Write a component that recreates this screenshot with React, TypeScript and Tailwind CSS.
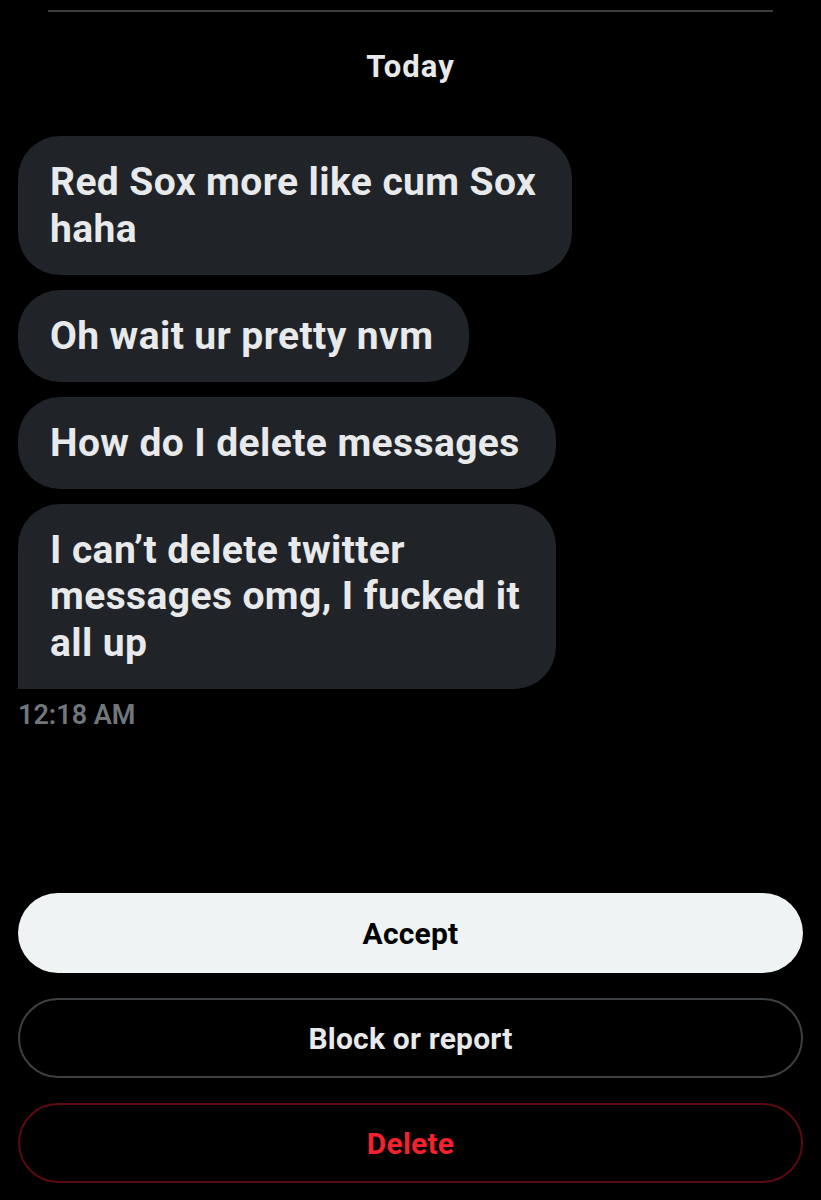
import React from 'react'

const messages = [
  ['Red Sox more like cum Sox', 'haha'],
  ['Oh wait ur pretty nvm'],
  ['How do I delete messages'],
  ['I can\u2019t delete twitter', 'messages omg, I fucked it', 'all up'],
]

const App = () => {
  return (
    <div className="w-full min-h-[1200px] bg-black flex flex-col font-['Roboto',sans-serif]">
      <div className="mx-[48px] mt-[10px] h-[2px] bg-[#3a3d40]" />

      <p className="mt-[35px] text-center text-[31px] leading-[40px] font-bold tracking-[1px] text-[#e7e9ea]">Today</p>

      <div className="mt-[49px] px-[18px] flex flex-col items-start gap-[14.5px]">
        {messages.map((lines, i) => (
          <div
            key={i}
            className={
              i === messages.length - 1
                ? 'w-fit bg-[#202327] rounded-[42px] rounded-bl-none pl-[32px] pr-[36px] py-[23px]'
                : 'w-fit bg-[#202327] rounded-[42px] pl-[32px] pr-[36px] py-[23px]'
            }
          >
            {lines.map((l, j) => (
              <p key={j} className="text-[39px] leading-[46.5px] font-bold tracking-[0.4px] text-[#e7e9ea] whitespace-nowrap">{l}</p>
            ))}
          </div>
        ))}
      </div>

      <p className="mt-[9px] px-[18px] text-[27px] leading-[34px] font-semibold text-[#71767b]">12:18 AM</p>

      <div className="mt-[161px] px-[18px] flex flex-col gap-[25px]">
        <button className="w-full h-[80px] rounded-full bg-[#eff3f4] text-[30px] font-bold tracking-[0.2px] text-black">Accept</button>
        <button className="w-full h-[80px] rounded-full border-2 border-[#3e4144] text-[30px] font-bold tracking-[0.2px] text-[#e7e9ea]">Block or report</button>
        <button className="w-full h-[80px] rounded-full border-2 border-[#5c0a10] text-[30px] font-bold tracking-[0.2px] text-[#f4212e]">Delete</button>
      </div>
    </div>
  )
}

export default App
